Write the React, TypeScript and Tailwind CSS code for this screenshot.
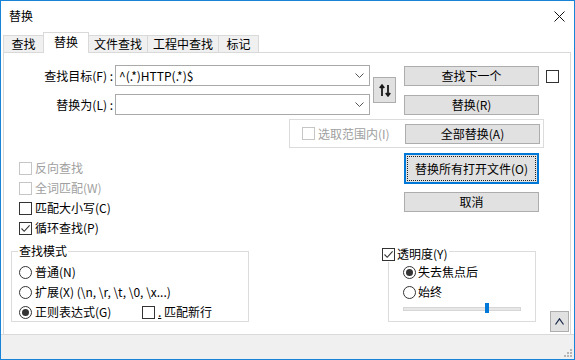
import React from 'react';

function Check({ checked, disabled }: { checked?: boolean; disabled?: boolean }) {
  return (
    <span
      className={`w-[13px] h-[13px] shrink-0 border bg-white flex items-center justify-center ${
        disabled ? 'border-[#c6c6c6]' : 'border-[#333333]'
      }`}
    >
      {checked && (
        <svg width="11" height="11" viewBox="0 0 11 11">
          <path d="M1.5 5.5 L4.2 8.3 L9.6 2.4" fill="none" stroke="#333333" strokeWidth="1.1" />
        </svg>
      )}
    </span>
  );
}

function Radio({ checked }: { checked?: boolean }) {
  return (
    <span className="w-[13px] h-[13px] shrink-0 rounded-full border border-[#333333] bg-white flex items-center justify-center">
      {checked && <span className="w-[7px] h-[7px] rounded-full bg-[#333333]" />}
    </span>
  );
}

function Btn({ children }: { children: React.ReactNode }) {
  return (
    <div className="w-[135px] h-[20px] bg-[#e1e1e1] border border-[#adadad] flex items-center justify-center">
      {children}
    </div>
  );
}

function Combo({ value }: { value?: string }) {
  return (
    <div className="w-[255px] h-[21px] ml-[2px] border border-[#a9a9a9] bg-white flex items-center pl-[3px] pr-[5px]">
      <span className="flex-1">{value}</span>
      <svg width="9" height="5" viewBox="0 0 9 5">
        <path d="M0.5 0.5 L4.5 4.5 L8.5 0.5" fill="none" stroke="#555555" strokeWidth="1" />
      </svg>
    </div>
  );
}

const tabs = [
  { label: '查找', w: 'w-[41px]' },
  { label: '替换', w: 'w-[46px]', active: true },
  { label: '文件查找', w: 'w-[60px]' },
  { label: '工程中查找', w: 'w-[72px]' },
  { label: '标记', w: 'w-[41px]' },
];

export default function App() {
  return (
    <div className="w-[575px] h-[360px] border border-[#1883d7] bg-white flex flex-col text-[12px] leading-[16px] text-black font-['Noto_Sans_CJK_SC',sans-serif] overflow-hidden">
      {/* Title bar */}
      <div className="h-[30px] shrink-0 flex items-center justify-between pl-[8px] pr-[8px]">
        <span>替换</span>
        <svg width="11" height="11" viewBox="0 0 11 11" className="mr-[1px]">
          <path d="M0.5 0.5 L10.5 10.5 M10.5 0.5 L0.5 10.5" stroke="#111111" strokeWidth="1" />
        </svg>
      </div>

      {/* Tabs */}
      <div className="h-[21px] shrink-0 flex items-end pl-[2px]">
        {tabs.map((t, i) => (
          <div
            key={t.label}
            className={`${t.w} ${i > 0 ? '-ml-px' : ''} border-t border-l border-r border-[#d9d9d9] flex items-center justify-center ${
              t.active ? 'h-[21px] -mb-px bg-white relative z-10 pb-[2px]' : 'h-[17px] bg-[#f0f0f0]'
            }`}
          >
            {t.label}
          </div>
        ))}
      </div>

      {/* Panel */}
      <div className="flex-1 ml-[2px] mr-[3px] border-t border-l border-r border-[#d9d9d9] flex flex-col">
        {/* Row A */}
        <div className="flex items-start mt-[12px]">
          <div className="flex flex-col gap-[8px]">
            <div className="flex items-center h-[21px]">
              <span className="w-[109px] text-right">查找目标(F) :</span>
              <Combo value="^(.*)HTTP(.*)$" />
            </div>
            <div className="flex items-center h-[21px]">
              <span className="w-[109px] text-right">替换为(L) :</span>
              <Combo />
            </div>
          </div>
          <div className="ml-[3px] mt-[12px] w-[23px] h-[26px] bg-[#e1e1e1] border border-[#adadad] flex items-center justify-center">
            <svg width="12" height="13" viewBox="0 0 12 13">
              <path d="M3 12 V1.5 M0.8 4 L3 1.2 L5.2 4" fill="none" stroke="#1a1a1a" strokeWidth="1.8" />
              <path d="M9 1 V11.5 M6.8 9 L9 11.8 L11.2 9" fill="none" stroke="#1a1a1a" strokeWidth="1.8" />
            </svg>
          </div>
          <div className="ml-[8px] mt-[1px] flex flex-col gap-[9px]">
            <Btn>查找下一个</Btn>
            <Btn>替换(R)</Btn>
          </div>
          <div className="ml-[7px] mt-[5px]">
            <Check />
          </div>
        </div>

        {/* Row B: in selection group */}
        <div className="mt-[4px] ml-[285px] w-[255px] h-[29px] border border-[#dcdcdc] flex items-center justify-between pl-[12px] pr-[3px]">
          <div className="flex items-center gap-[3px] text-[#a0a0a0]">
            <Check disabled />
            <span>选取范围内(I)</span>
          </div>
          <Btn>全部替换(A)</Btn>
        </div>

        {/* Row C */}
        <div className="flex items-start">
          <div className="ml-[15px] mt-[10px] w-[385px] flex flex-col">
            <div className="h-[20px] flex items-center gap-[3px] text-[#a0a0a0]">
              <Check disabled />
              <span>反向查找</span>
            </div>
            <div className="h-[20px] flex items-center gap-[3px] text-[#a0a0a0]">
              <Check disabled />
              <span>全词匹配(W)</span>
            </div>
            <div className="h-[20px] flex items-center gap-[3px]">
              <Check />
              <span>匹配大小写(C)</span>
            </div>
            <div className="h-[20px] flex items-center gap-[3px]">
              <Check checked />
              <span>循环查找(P)</span>
            </div>
          </div>
          <div className="mt-[5px] flex flex-col gap-[8px]">
            <div className="w-[135px] h-[31px] bg-[#e1e1e1] border-2 border-[#0078d7] p-[1px]">
              <div className="w-full h-full border border-dotted border-[#222222] flex items-center justify-center">
                替换所有打开文件(O)
              </div>
            </div>
            <Btn>取消</Btn>
          </div>
        </div>

        {/* Row D */}
        <div className="flex items-start mt-[13px]">
          <div className="ml-[7px] w-[238px] h-[71px] border border-[#dcdcdc] relative pt-[10px] pl-[7px]">
            <span className="absolute -top-[9px] left-[6px] bg-white px-px">查找模式</span>
            <div className="h-[20px] flex items-center gap-[3px]">
              <Radio />
              <span>普通(N)</span>
            </div>
            <div className="h-[20px] flex items-center gap-[3px]">
              <Radio />
              <span>{'扩展(X) (\\n, \\r, \\t, \\0, \\x...)'}</span>
            </div>
            <div className="h-[20px] flex items-center">
              <div className="w-[123px] flex items-center gap-[3px]">
                <Radio checked />
                <span>正则表达式(G)</span>
              </div>
              <div className="flex items-center gap-[3px]">
                <Check />
                <span>
                  <span className="underline">.</span> 匹配新行
                </span>
              </div>
            </div>
          </div>

          <div className="ml-[139px] w-[148px] h-[71px] border border-[#dcdcdc] relative pt-[10px] pl-[14px]">
            <div className="absolute -top-[6px] -left-[7px] bg-white flex items-center gap-[2px] pr-[2px]">
              <Check checked />
              <span>透明度(Y)</span>
            </div>
            <div className="h-[20px] flex items-center gap-[2px]">
              <Radio checked />
              <span>失去焦点后</span>
            </div>
            <div className="h-[20px] flex items-center gap-[2px]">
              <Radio />
              <span>始终</span>
            </div>
            <div className="h-[13px] w-[118px] flex items-center relative">
              <div className="w-full h-[4px] bg-[#e7e7e7] border border-[#d6d6d6]" />
              <div className="absolute left-[82px] top-[1px] w-[4px] h-[10px] bg-[#0078d7]" />
            </div>
          </div>

          <div className="ml-[14px] mt-[60px] w-[19px] h-[21px] bg-[#e1e1e1] border border-[#adadad] flex items-center justify-center">
            <svg width="9" height="7" viewBox="0 0 9 7">
              <path d="M0.5 6.5 L4.5 0.8 L8.5 6.5" fill="none" stroke="#1a2a4a" strokeWidth="1.2" />
            </svg>
          </div>
        </div>
      </div>

      {/* Status strip */}
      <div className="h-[25px] shrink-0 bg-[#f0f0f0] border-t border-[#dadada] flex items-end justify-end pr-[2px] pb-[2px]">
        <svg width="10" height="10" viewBox="0 0 10 10">
          <rect x="8" y="2" width="2" height="2" fill="#b5b5b5" />
          <rect x="5" y="5" width="2" height="2" fill="#b5b5b5" />
          <rect x="8" y="5" width="2" height="2" fill="#b5b5b5" />
          <rect x="2" y="8" width="2" height="2" fill="#b5b5b5" />
          <rect x="5" y="8" width="2" height="2" fill="#b5b5b5" />
          <rect x="8" y="8" width="2" height="2" fill="#b5b5b5" />
        </svg>
      </div>
    </div>
  );
}
